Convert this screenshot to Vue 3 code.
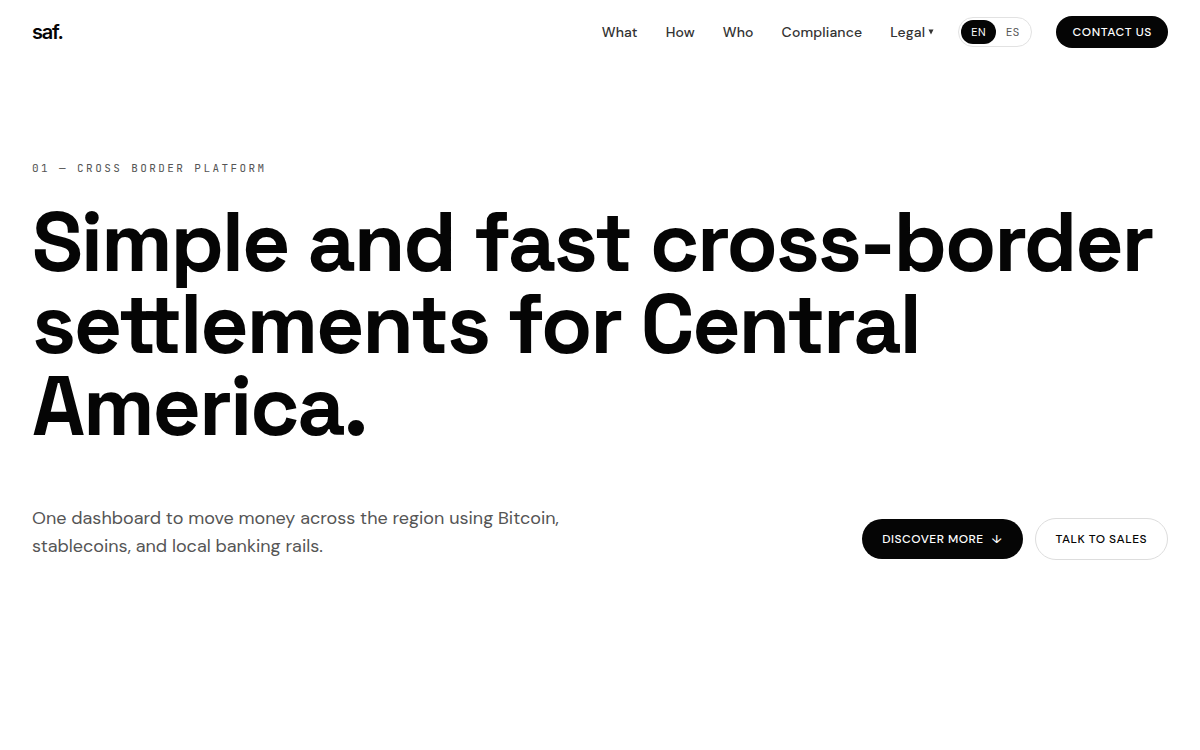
<script setup>
import { ref } from 'vue'
const links = ['What', 'How', 'Who', 'Compliance']
const languages = ['EN', 'ES']
const language = ref('EN')
</script>

<template>
  <div class="page">
    <header class="bar">
      <a class="brand" href="#top">saf.</a>
      <nav class="nav" aria-label="Main">
        <a v-for="link in links" :key="link" class="link" :href="'#' + link.toLowerCase()">{{ link }}</a>
        <button class="link legal" type="button">Legal <svg class="caret" viewBox="0 0 6 6" aria-hidden="true"><path d="M.5.5h5L3 5.5z" fill="currentColor" /></svg></button>
      </nav>
      <div class="languages" role="group" aria-label="Language">
        <button v-for="code in languages" :key="code" class="language" :class="{ active: language === code }" type="button" @click="language = code">{{ code }}</button>
      </div>
      <a class="button dark contact" href="#contact">CONTACT US</a>
    </header>
    <main id="top" class="hero">
      <p class="eyebrow">01 — CROSS BORDER PLATFORM</p>
      <h1 class="title">Simple and fast cross-border settlements for Central America.</h1>
      <div class="foot">
        <p class="lead">One dashboard to move money across the region using Bitcoin, stablecoins, and local banking rails.</p>
        <div class="actions">
          <a class="button dark" href="#what">DISCOVER MORE <span aria-hidden="true">↓</span></a>
          <a class="button light" href="#sales">TALK TO SALES</a>
        </div>
      </div>
    </main>
  </div>
</template>

<style>
body { margin: 0; background: #fff; }
</style>

<style scoped>
.page { font-family: "DM Sans", "Open Sans", "Noto Sans", sans-serif; color: #050505; }
.bar { display: flex; align-items: center; height: 64px; padding: 0 32px; }
a { color: inherit; text-decoration: none; }
button { font-family: inherit; border: 0; background: none; padding: 0; cursor: pointer; }
.brand { font: 600 20px/24px Inter, sans-serif; letter-spacing: -0.06em; margin-right: auto; }
.nav { display: flex; align-items: center; gap: 28px; }
.link { font-size: 14px; line-height: 20px; font-weight: 500; letter-spacing: 0.01em; color: #333; }
.legal { display: flex; align-items: center; gap: 3px; }
.caret { width: 6px; height: 6px; }
.languages { display: flex; box-sizing: border-box; height: 30px; padding: 2px; margin: 0 24px; border: 1px solid #e2e2e2; border-radius: 15px; }
.language { padding: 0 10px; border-radius: 12px; font-size: 11px; line-height: 24px; letter-spacing: 0.04em; color: #555; }
.language.active { background: #050505; color: #fff; }
.button { display: inline-flex; box-sizing: border-box; align-items: center; justify-content: center; gap: 8px; height: 40px; padding: 0 20px; border-radius: 21px; font-size: 12px; line-height: 16px; font-weight: 500; letter-spacing: 0.04em; white-space: nowrap; }
.dark { background: #050505; color: #fff; }
.contact { height: 32px; padding: 0 16px; letter-spacing: 0.05em; }
.light { height: 42px; border: 1px solid #ddd; }
.hero { padding: 96px 32px 0; }
.eyebrow { margin: 0; font: 11px/16px "JetBrains Mono", "Liberation Mono", monospace; letter-spacing: 0.22em; color: #555; }
.title { margin: 25px 0 0; font: 600 84px/82px "Space Grotesk", Inter, sans-serif; letter-spacing: -0.026em; }
.foot { display: flex; justify-content: space-between; align-items: flex-end; gap: 32px; margin-top: 57px; }
.lead { margin: 0; max-width: 560px; font-size: 18px; line-height: 28px; color: #555; }
.actions { display: flex; align-items: center; gap: 12px; }
</style>
